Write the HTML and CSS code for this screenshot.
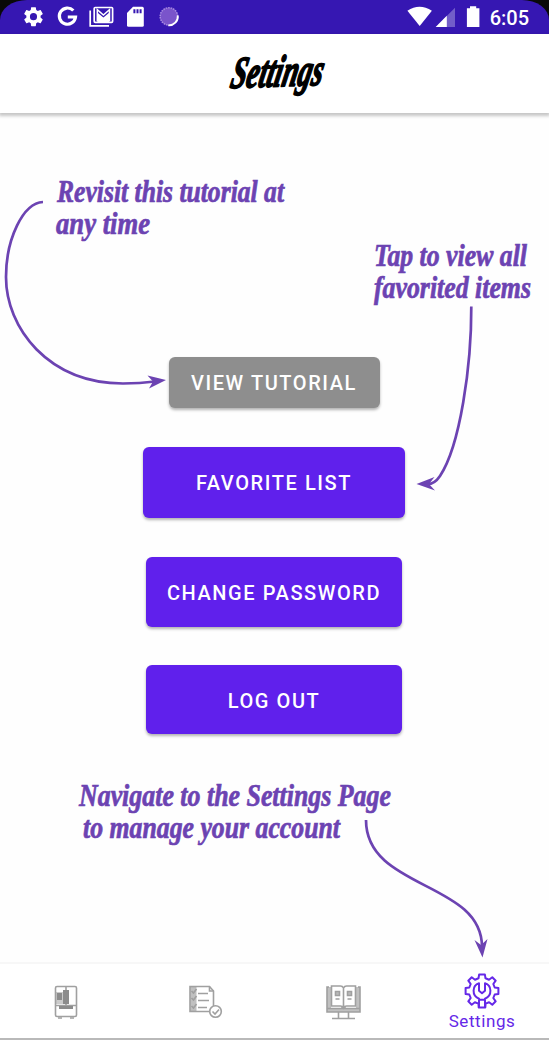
FILE: index.html
```html
<!DOCTYPE html>
<html lang="en">
<head>
<meta charset="utf-8">
<title>Settings</title>
<link rel="stylesheet" href="styles.css">
</head>
<body>
<div class="screen">
  <header class="status">
    <div class="status-bar">
      <svg class="status-icons" width="170" height="34" viewBox="16 0 170 34" fill="#fff">
        <g transform="translate(21.6 4.8) scale(.99)"><path d="M19.14 12.94c.04-.3.06-.61.06-.94 0-.32-.02-.64-.07-.94l2.03-1.58a.49.49 0 0 0 .12-.61l-1.92-3.32a.488.488 0 0 0-.59-.22l-2.39.96c-.5-.38-1.03-.7-1.62-.94l-.36-2.54a.484.484 0 0 0-.48-.41h-3.84c-.24 0-.43.17-.47.41l-.36 2.54c-.59.24-1.13.57-1.62.94l-2.39-.96c-.22-.08-.47 0-.59.22L2.74 8.87c-.12.21-.08.47.12.61l2.03 1.58c-.05.3-.09.63-.09.94s.02.64.07.94l-2.03 1.58a.49.49 0 0 0-.12.61l1.92 3.32c.12.22.37.29.59.22l2.39-.96c.5.38 1.03.7 1.62.94l.36 2.54c.05.24.24.41.48.41h3.84c.24 0 .44-.17.47-.41l.36-2.54c.59-.24 1.13-.56 1.62-.94l2.39.96c.22.08.47 0 .59-.22l1.92-3.32c.12-.22.07-.47-.12-.61l-2.01-1.58zM12 15.6A3.6 3.6 0 1 1 12 8.400a3.600 3.600 0 0 1 0 7.200z"/></g>
        <path d="M73.300 10.500A8.100 8.100 0 1 0 75.500 17H67.800" fill="none" stroke="#fff" stroke-width="3.200"/>
        <path d="M90.200 10.500V25.800H109" fill="none" stroke="#fff" stroke-width="1.700"/>
        <rect x="94.200" y="7.500" width="18.400" height="14.800" rx="1" fill="none" stroke="#fff" stroke-width="1.700"/>
        <path d="M97.300 21V9.700l6.100 5.300 6.100-5.300V21" fill="none" stroke="#fff" stroke-width="1.500"/>
        <path d="M97.300 12.500l6.100 5.100 6.100-5.100V22H97.300z"/>
        <path d="M133 6.800h9.300q1.500 0 1.500 1.500v17q0 1.500-1.500 1.500h-13.800q-1.500 0-1.500-1.500V13z"/>
        <path d="M133.400 9.200h2v4h-2zM136.500 9.200h2v4h-2zM139.600 9.200h2v4h-2z" fill="#3617b2"/>
        <circle cx="168.900" cy="16.400" r="9" fill="#7a54cb"/>
        <circle cx="168.900" cy="16.400" r="8.700" fill="none" stroke="#a88ce0" stroke-width="1.500" stroke-dasharray="1.500 1"/>
        <path d="M177.800 15.500a9 9 0 0 1-9.500 9.900" fill="none" stroke="#fff" stroke-width="1.800"/>
      </svg>
      <div class="status-right">
        <svg width="76" height="34" viewBox="406 0 76 34" fill="#fff">
          <path d="M407.400 10.800Q419.500 2.500 431.900 10.800L419.700 26z"/>
          <path d="M455 7.800V27h-19.300z" opacity=".3"/>
          <path d="M446.800 15.800V27h-11.100z"/>
          <path d="M470 6.200h6.200v2h3.200V27h-12.500V8.200h3.100z"/>
        </svg>
        <span class="clock">6:05</span>
      </div>
    </div>
  </header>
  <div class="toolbar">
    <svg width="130" height="66" viewBox="212 45 130 66" role="heading" aria-level="1">
      <text class="title" transform="translate(229 88) rotate(-2) skewX(-14)" textLength="92" lengthAdjust="spacingAndGlyphs">Settings</text>
    </svg>
  </div>
  <main class="actions">
    <button class="btn btn-tutorial">VIEW TUTORIAL</button>
    <button class="btn btn-favorite">FAVORITE LIST</button>
    <button class="btn btn-password">CHANGE PASSWORD</button>
    <button class="btn btn-logout">LOG OUT</button>
  </main>
  <nav class="tabs">
    <div class="tab">
      <svg width="40" height="40" viewBox="46 982 40 40" class="muted">
        <rect x="55.500" y="986.500" width="21" height="30" rx="1.500"/>
        <path d="M55.500 1005.500h21M66 987v18M58 1018h4M70 1018h4"/>
        <path class="fill" d="M63 990h6v14h-6zM57 993h5v7h-5zM59 1006h14v3h-14z"/>
        <path class="fill" d="M56 992h7v12h-7z" opacity=".45"/>
      </svg>
    </div>
    <div class="tab">
      <svg width="40" height="40" viewBox="184 982 40 40" class="muted">
        <path d="M209 1011.500h-20v-25h19.500l4 4.500v15"/>
        <path d="M208.500 986.500v4.500h4M197 993.500h10M197 1000.500h11M197 1007.500h9"/>
        <path class="fill" d="M189.500 987h6v24h-6z" opacity=".55"/>
        <path d="M190.500 991l2 2 3-4M190.500 998l2 2 3-4M190.500 1006l2 2 3-4"/>
        <circle cx="214.500" cy="1011.500" r="5.800" fill="#fff"/>
        <path d="M211.500 1011.500l2.500 2.500 4-4.500"/>
      </svg>
    </div>
    <div class="tab">
      <svg width="40" height="40" viewBox="323 982 40 40" class="muted">
        <path class="fill" d="M327 987h4v22h25v-22h4v25h-33z" opacity=".55"/>
        <path d="M329 987h-2v25h33v-25h-2M327 1008.500h33M338.500 1012v6M348.500 1012v6M332 1018.500h23"/>
        <path d="M343.500 988q-1-2-3-2h-9v20h9q2 0 3 2 1-2 3-2h9v-20h-9q-2 0-3 2v19"/>
        <path class="fill" d="M335 991h5v5h-5zM347 991h5v5h-5z" opacity=".6"/>
        <path d="M335.500 991.500h4v4h-4zM347.500 991.500h4v4h-4zM335.500 999h4M347.500 999h4M341 1008h5"/>
      </svg>
    </div>
    <div class="tab tab-active">
      <svg width="36" height="36" viewBox="-18 -18 36 36" class="gear">
        <path d="M-3.600 11.500-3.300 16.400H3.300L3.600 12.600 7.100 11.200 10.300 13.700 13.700 10.300 11.300 7 12.700 3.500 16.400 2.900V-2.900L12.700-3.500 11.300-7 13.700-10.300 10.300-13.700 7-11.300 3.500-12.700 2.900-16.400H-2.900L-3.500-12.700-7-11.300-10.300-13.700-13.700-10.300-11.300-7-12.700-3.500-16.400-2.900V2.900L-12.700 3.500-11.300 7-13.700 10.300-10.300 13.700-7.100 11.200-3.600 12.600"/>
        <path d="M-3 16.200V7.700C-10.600 4.700-9.800-5.800-3-7.700V-.2L0 2.200 3-.2V-7.700C9.800-5.800 10.600 4.700 3 7.700V16.200M-3 8.700H3"/>
      </svg>
      <span class="tab-label">Settings</span>
    </div>
  </nav>
  <svg class="guide" width="549" height="1041" viewBox="0 0 549 1041">
    <g class="note">
      <text x="57" y="202" textLength="227" lengthAdjust="spacingAndGlyphs">Revisit this tutorial at</text>
      <text x="56" y="234" textLength="94" lengthAdjust="spacingAndGlyphs">any time</text>
      <text x="374" y="266" textLength="153" lengthAdjust="spacingAndGlyphs">Tap to view all</text>
      <text x="374" y="298" textLength="157" lengthAdjust="spacingAndGlyphs">favorited items</text>
      <text x="79" y="806" textLength="312" lengthAdjust="spacingAndGlyphs">Navigate to the Settings Page</text>
      <text x="83" y="838" textLength="257" lengthAdjust="spacingAndGlyphs">to manage your account</text>
    </g>
    <g class="arrow-line">
      <path d="M43 202C23 203 6 239 6 277C6 328 48 383 123 383.500Q140 383.500 155 381.500"/>
      <path d="M471.300 306.500C471.500 366 460 446 440 476Q434 485 426 484"/>
      <path d="M366 820C366 890 482 881 482 947"/>
    </g>
    <g class="arrow-head">
      <path d="M166 380 147.500 375.500 153 381.500 149 388.500z"/>
      <path d="M416.500 484 434.500 477 429 484 435 490.500z"/>
      <path d="M482.500 957.500 474.500 940 481 945 487.500 939z"/>
    </g>
  </svg>
</div>
</body>
</html>
```
FILE: styles.css
```css
* { box-sizing: border-box; }
body { margin: 0; background: #fefefe; font-family: Roboto, "Liberation Sans", sans-serif; }
.screen { position: relative; display: flex; flex-direction: column; width: 549px; height: 1041px; overflow: hidden; }
.status { height: 34px; flex: none; background: #090909; }
.status-bar { display: flex; justify-content: space-between; height: 34px; padding: 0 20px 0 16px; background: #3617b2; border-radius: 27px 27px 0 0 / 20px 20px 0 0; }
.status-right { display: flex; gap: 8px; }
.clock { color: #fff; font-size: 20px; line-height: 36px; font-weight: 500; }
.toolbar { height: 79px; flex: none; display: flex; justify-content: center; padding-top: 11px; padding-left: 5px; background: #fff; box-shadow: 0 2px 3px 1px rgba(0, 0, 0, .22); }
.title { font: italic bold 45px "Liberation Serif", serif; fill: #000; stroke: #000; stroke-width: 1.800; stroke-linejoin: round; }
.actions { flex: 1; display: flex; flex-direction: column; align-items: center; padding: 243.500px 1px 0 0; }
.btn { border: 0; padding: 2px 0 0; border-radius: 6px; color: #fff; background: #6020ec; font: 500 20px/1 Roboto, sans-serif; letter-spacing: 1.580px; box-shadow: 0 2px 3px rgba(0, 0, 0, .3); flex: none; }
.btn-tutorial { width: 211px; height: 51px; margin-bottom: 39px; background: #8e8e8e; }
.btn-favorite { width: 262px; height: 71.500px; margin-bottom: 39px; }
.btn-password { width: 256.500px; height: 69.500px; margin-bottom: 38.500px; }
.btn-logout { width: 256px; height: 68.500px; padding-top: 3px; }
.tabs { flex: none; display: grid; grid-template-columns: repeat(4, 138.700px); justify-content: center; height: 79px; padding-right: 1px; border-top: 2px solid #f7f7f7; background: linear-gradient(#fff 74px, #b9b9b9 74px 76px, #fff 76px); }
.tab { display: flex; flex-direction: column; align-items: center; padding-top: 18px; }
.tab-active { padding-top: 9px; color: #6528e8; }
.tab-label { font-size: 17px; line-height: 20px; letter-spacing: .580px; margin-top: 2px; }
.muted { fill: none; stroke: #a0a0a0; stroke-width: 1.600; filter: blur(.6px); }
.muted .fill { fill: #8c8c8c; stroke: none; }
.gear { fill: none; stroke: #6528e8; stroke-width: 2; stroke-linejoin: round; }
.guide { position: absolute; left: 0; top: 0; pointer-events: none; }
.note { font: italic bold 31px "Liberation Serif", serif; fill: #6c43b2; stroke: #6c43b2; stroke-width: .700; }
.arrow-line { fill: none; stroke: #6c43b2; stroke-width: 2.700; }
.arrow-head { fill: #6c43b2; }
```
